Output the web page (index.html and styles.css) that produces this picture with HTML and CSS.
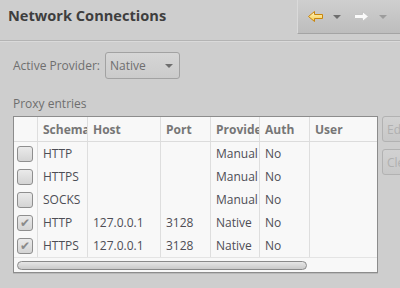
FILE: index.html
```html
<!DOCTYPE html>
<html lang="en">
<head>
    <meta charset="UTF-8">
    <title>Network Connections</title>
    <link rel="stylesheet" href="styles.css">
</head>
<body>
    <div class="header">
        <h1>Network Connections</h1>
        <div class="toolbar">
            <svg class="nav" width="17" height="13" viewBox="0 0 17 13">
                <defs>
                    <linearGradient id="gold" x1="0" y1="0" x2="0" y2="1">
                        <stop offset="0" stop-color="#fff6c8"/>
                        <stop offset="1" stop-color="#f6cc48"/>
                    </linearGradient>
                </defs>
                <path d="M1.5 6.5 L7.5 1.5 L7.5 4.5 L15.5 4.5 L15.5 8.5 L7.5 8.5 L7.5 11.5 Z" fill="url(#gold)" stroke="#c9850c" stroke-linejoin="round"/>
            </svg>
            <span class="drop"></span>
            <svg class="nav" width="17" height="13" viewBox="0 0 17 13">
                <path d="M15.5 6.5 L9.5 1.5 L9.5 4.5 L1.5 4.5 L1.5 8.5 L9.5 8.5 L9.5 11.5 Z" fill="#fafafa" stroke="#c4c4c4" stroke-linejoin="round"/>
            </svg>
            <span class="drop off"></span>
        </div>
    </div>

    <div class="content">
        <div class="provider">
            <span>Active Provider:</span>
            <div class="combo">
                <span>Native</span>
                <span class="drop"></span>
            </div>
        </div>

        <div class="section-label">Proxy entries</div>

        <div class="entries">
            <div class="table">
                <div class="row head">
                    <div class="cell"></div>
                    <div class="cell">Schema</div>
                    <div class="cell">Host</div>
                    <div class="cell">Port</div>
                    <div class="cell">Provider</div>
                    <div class="cell">Auth</div>
                    <div class="cell">User</div>
                </div>
                <div class="row">
                    <div class="cell"><span class="check"></span></div>
                    <div class="cell">HTTP</div>
                    <div class="cell"></div>
                    <div class="cell"></div>
                    <div class="cell">Manual</div>
                    <div class="cell">No</div>
                    <div class="cell"></div>
                </div>
                <div class="row">
                    <div class="cell"><span class="check"></span></div>
                    <div class="cell">HTTPS</div>
                    <div class="cell"></div>
                    <div class="cell"></div>
                    <div class="cell">Manual</div>
                    <div class="cell">No</div>
                    <div class="cell"></div>
                </div>
                <div class="row">
                    <div class="cell"><span class="check"></span></div>
                    <div class="cell">SOCKS</div>
                    <div class="cell"></div>
                    <div class="cell"></div>
                    <div class="cell">Manual</div>
                    <div class="cell">No</div>
                    <div class="cell"></div>
                </div>
                <div class="row">
                    <div class="cell"><span class="check on">&#10004;</span></div>
                    <div class="cell">HTTP</div>
                    <div class="cell">127.0.0.1</div>
                    <div class="cell">3128</div>
                    <div class="cell">Native</div>
                    <div class="cell">No</div>
                    <div class="cell"></div>
                </div>
                <div class="row">
                    <div class="cell"><span class="check on">&#10004;</span></div>
                    <div class="cell">HTTPS</div>
                    <div class="cell">127.0.0.1</div>
                    <div class="cell">3128</div>
                    <div class="cell">Native</div>
                    <div class="cell">No</div>
                    <div class="cell"></div>
                </div>
                <div class="scroll">
                    <div class="thumb"></div>
                </div>
            </div>

            <div class="buttons">
                <button disabled>Edit...</button>
                <button disabled>Clear</button>
            </div>
        </div>
    </div>
</body>
</html>
```

FILE: styles.css
```css
body {
    background-color: #cecece;
    font-family: 'Open Sans', 'DejaVu Sans', sans-serif;
    font-size: 12px;
    color: #6e6e6e;
    margin: 0;
    width: 400px;
    height: 288px;
    overflow: hidden;
}

.header {
    display: flex;
    height: 40px;
    border-bottom: 1px solid #b4b4b4;
    box-shadow: 0 1px 0 #dadada;
}

h1 {
    margin: 0;
    padding: 5px 0 0 8px;
    font-size: 14.6px;
    font-weight: 700;
    color: #3e3e3e;
}

.toolbar {
    margin-left: auto;
    width: 103px;
    height: 34px;
    display: flex;
    align-items: center;
    padding-left: 9px;
    box-sizing: border-box;
    background: linear-gradient(#cfcfcf, #bdbdbd);
    border-bottom: 1px solid #a4a4a4;
    border-left: 1px solid #dadada;
}

.nav {
    display: block;
}

.drop {
    width: 0;
    height: 0;
    border-left: 4px solid transparent;
    border-right: 4px solid transparent;
    border-top: 4px solid #6e6e6e;
    margin: 0 12px 0 9px;
}

.drop.off {
    border-top-color: #9c9c9c;
}

.content {
    padding: 11px 0 0 13px;
}

.provider {
    display: flex;
    align-items: center;
    gap: 5px;
}

.combo {
    width: 75px;
    height: 27px;
    box-sizing: border-box;
    border: 1px solid #a2a2a2;
    border-radius: 3px;
    background: linear-gradient(#d6d6d6, #cbcbcb);
    display: flex;
    align-items: center;
    justify-content: space-between;
    padding-left: 4px;
}

.combo .drop {
    margin: 0 6px 0 0;
}

.section-label {
    margin-top: 16px;
    height: 21px;
}

.entries {
    display: flex;
    gap: 4px;
}

.table {
    width: 365px;
    height: 157px;
    box-sizing: border-box;
    flex-shrink: 0;
    border: 1px solid #8c8c8c;
    background-color: #f8f8f8;
    box-shadow: 0 1px 0 #b8b8b8;
}

.row {
    display: grid;
    grid-template-columns: 24px 50px 73px 50px 49px 50px 1fr;
    height: 23px;
    color: #4d4d55;
}

.row.head {
    height: 24px;
    border-bottom: 1px solid #dcdcdc;
    color: #767676;
    font-weight: 700;
}

.cell {
    border-right: 1px solid #dedede;
    padding-left: 5px;
    white-space: nowrap;
    overflow: hidden;
    display: flex;
    align-items: center;
}

.cell:last-child {
    border-right: none;
}

.row .cell:first-child {
    padding-left: 3px;
}

.check {
    width: 14px;
    height: 14px;
    border: 1px solid #8e8e8e;
    border-radius: 3px;
    background: linear-gradient(#eaeaea, #d4d4d4);
    font-size: 12px;
    line-height: 14px;
    text-align: center;
    color: #8a8a8a;
}

.scroll {
    border-top: 1px solid #e4e4e4;
    padding: 3px 0 0 3px;
    box-sizing: border-box;
    height: 15px;
}

.thumb {
    width: 290px;
    height: 9px;
    box-sizing: border-box;
    border: 1px solid #8a8a8a;
    border-radius: 5px;
    background: linear-gradient(#e6e6e6, #cacaca);
}

.buttons {
    display: flex;
    flex-direction: column;
    gap: 7px;
}

.buttons button {
    width: 46px;
    height: 26px;
    font-family: 'Open Sans', 'DejaVu Sans', sans-serif;
    font-size: 12px;
    color: #b0b0b0;
    text-align: left;
    padding: 0 4px;
    border: 1px solid #b2b2b2;
    border-radius: 3px;
    background: linear-gradient(#d2d2d2, #c8c8c8);
}
```
